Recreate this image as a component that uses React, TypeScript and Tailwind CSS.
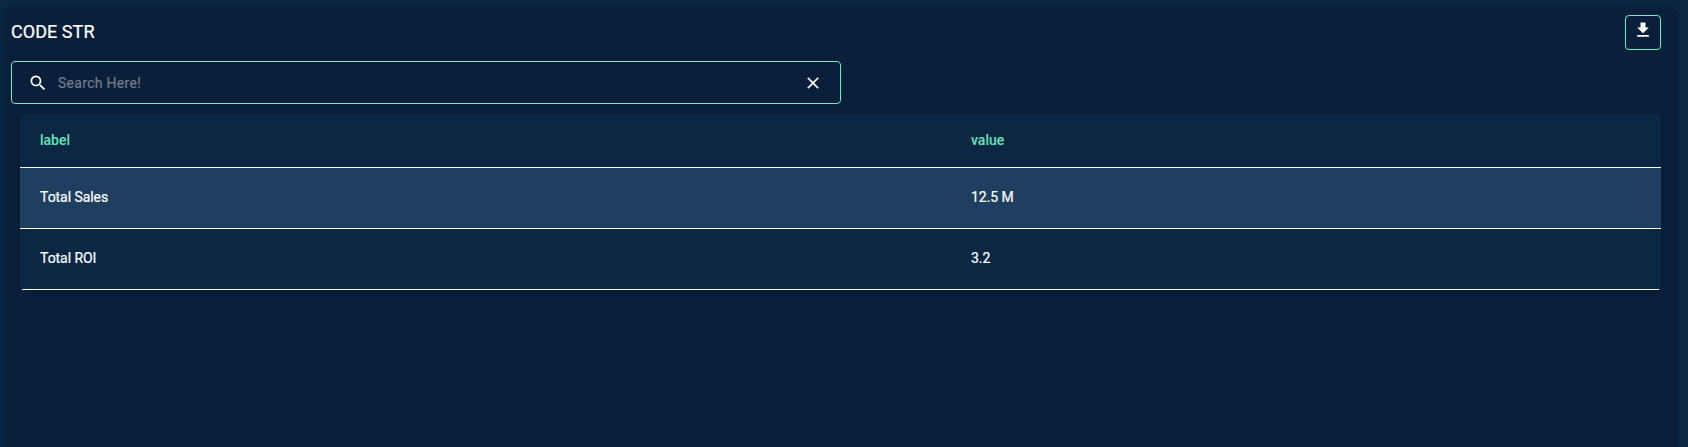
import { MdClose, MdSearch } from "react-icons/md";

const rows = [
  { label: "Total Sales", value: "12.5 M", shade: "bg-[#1f3f61]" },
  { label: "Total ROI", value: "3.2", shade: "bg-[#0b2743]" },
];

function DownloadIcon() {
  return (
    <svg viewBox="0 0 24 24" className="size-5 fill-white">
      <path d="M19 9h-4V3H9v6H5l7 7 7-7zM5 18v2h14v-2H5z" />
    </svg>
  );
}

export default function App() {
  return (
    <div className="h-[447px] overflow-hidden bg-[#0b2743] pt-2 pr-2.5 pl-1 font-['Roboto',sans-serif] text-white">
      <main className="h-[460px] rounded-lg bg-[#0a1f39] pt-[7px] pr-[17px] pl-[7px] shadow-[0_0_4px_rgba(0,0,0,0.12)]">
        <header className="flex h-[46px] items-start justify-between">
          <h1 className="pt-[3px] text-lg leading-[27px] tracking-[0.05px] [-webkit-text-stroke:0.2px_white]">CODE STR</h1>
          <button className="flex h-[35px] w-9 justify-center rounded border border-[#64f0c0] pt-1">
            <DownloadIcon />
          </button>
        </header>
        <div className="flex h-[43px] w-[830px] items-center rounded border border-[#64f0c0] pr-[17px] pl-4">
          <MdSearch size={20} />
          <input
            className="ml-2.5 min-w-0 flex-1 bg-transparent text-sm tracking-[0.3px] outline-none placeholder:text-[#737d8c] placeholder:[-webkit-text-stroke:0.2px_#737d8c]"
            placeholder="Search Here!"
          />
          <MdClose size={20} />
        </div>
        <div className="mt-2.5 ml-[9px] overflow-hidden rounded text-sm shadow-[0_1px_3px_rgba(0,0,0,0.25)]">
          <div className="flex h-[54px] items-center border-b border-white bg-[#0b2743] pb-0.5 pl-5 font-medium text-[#64e8b8]">
            <span className="w-[931px]">label</span>
            <span>value</span>
          </div>
          {rows.map((row) => (
            <div key={row.label} className={`flex h-[61px] items-center border-b border-white pb-0.5 pl-5 tracking-[-0.05px] [-webkit-text-stroke:0.2px_white] ${row.shade}`}>
              <span className="w-[931px]">{row.label}</span>
              <span>{row.value}</span>
            </div>
          ))}
        </div>
      </main>
    </div>
  );
}
